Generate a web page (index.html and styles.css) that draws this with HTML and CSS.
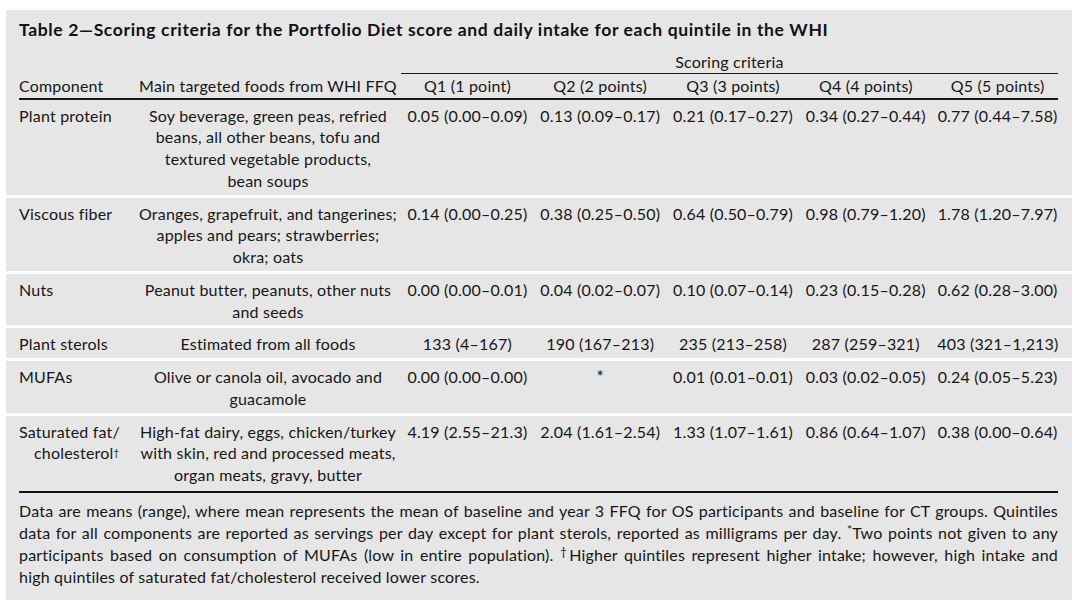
FILE: index.html
```html
<!DOCTYPE html>
<html lang="en">
<head>
<meta charset="utf-8">
<title>Table 2</title>
<link rel="stylesheet" href="styles.css">
</head>
<body>
<div class="panel">
  <div class="title">Table 2—Scoring criteria for the Portfolio Diet score and daily intake for each quintile in the WHI</div>
  <table class="tbl">
    <colgroup>
      <col class="c-g1"><col class="c-comp"><col class="c-food"><col class="c-q"><col class="c-q"><col class="c-q"><col class="c-q"><col class="c-q5"><col class="c-g2">
    </colgroup>
    <thead>
      <tr class="super">
        <th class="g"></th><th></th><th></th>
        <th class="span" colspan="5">Scoring criteria</th>
        <th class="g"></th>
      </tr>
      <tr class="head">
        <th class="g"></th>
        <th class="comp">Component</th>
        <th class="food">Main targeted foods from WHI FFQ</th>
        <th>Q1 (1 point)</th>
        <th>Q2 (2 points)</th>
        <th>Q3 (3 points)</th>
        <th>Q4 (4 points)</th>
        <th class="q5">Q5 (5 points)</th>
        <th class="g"></th>
      </tr>
    </thead>
    <tbody>
      <tr>
        <td class="g"></td>
        <td class="comp">Plant protein</td>
        <td class="food">Soy beverage, green peas, refried<br>beans, all other beans, tofu and<br>textured vegetable products,<br>bean soups</td>
        <td>0.05 (0.00–0.09)</td>
        <td>0.13 (0.09–0.17)</td>
        <td>0.21 (0.17–0.27)</td>
        <td>0.34 (0.27–0.44)</td>
        <td class="q5">0.77 (0.44–7.58)</td>
        <td class="g"></td>
      </tr>
      <tr>
        <td class="g"></td>
        <td class="comp">Viscous fiber</td>
        <td class="food">Oranges, grapefruit, and tangerines;<br>apples and pears; strawberries;<br>okra; oats</td>
        <td>0.14 (0.00–0.25)</td>
        <td>0.38 (0.25–0.50)</td>
        <td>0.64 (0.50–0.79)</td>
        <td>0.98 (0.79–1.20)</td>
        <td class="q5">1.78 (1.20–7.97)</td>
        <td class="g"></td>
      </tr>
      <tr>
        <td class="g"></td>
        <td class="comp">Nuts</td>
        <td class="food">Peanut butter, peanuts, other nuts<br>and seeds</td>
        <td>0.00 (0.00–0.01)</td>
        <td>0.04 (0.02–0.07)</td>
        <td>0.10 (0.07–0.14)</td>
        <td>0.23 (0.15–0.28)</td>
        <td class="q5">0.62 (0.28–3.00)</td>
        <td class="g"></td>
      </tr>
      <tr>
        <td class="g"></td>
        <td class="comp">Plant sterols</td>
        <td class="food">Estimated from all foods</td>
        <td>133 (4–167)</td>
        <td>190 (167–213)</td>
        <td>235 (213–258)</td>
        <td>287 (259–321)</td>
        <td class="q5">403 (321–1,213)</td>
        <td class="g"></td>
      </tr>
      <tr>
        <td class="g"></td>
        <td class="comp">MUFAs</td>
        <td class="food">Olive or canola oil, avocado and<br>guacamole</td>
        <td>0.00 (0.00–0.00)</td>
        <td class="star">*</td>
        <td>0.01 (0.01–0.01)</td>
        <td>0.03 (0.02–0.05)</td>
        <td class="q5">0.24 (0.05–5.23)</td>
        <td class="g"></td>
      </tr>
      <tr class="last">
        <td class="g"></td>
        <td class="comp hang">Saturated fat/ cholesterol<sup>†</sup></td>
        <td class="food">High-fat dairy, eggs, chicken/turkey<br>with skin, red and processed meats,<br>organ meats, gravy, butter</td>
        <td>4.19 (2.55–21.3)</td>
        <td>2.04 (1.61–2.54)</td>
        <td>1.33 (1.07–1.61)</td>
        <td>0.86 (0.64–1.07)</td>
        <td class="q5">0.38 (0.00–0.64)</td>
        <td class="g"></td>
      </tr>
    </tbody>
  </table>
  <div class="note">
    <span class="line">Data are means (range), where mean represents the mean of baseline and year 3 FFQ for OS participants and baseline for CT groups. Quintiles</span>
    <span class="line">data for all components are reported as servings per day except for plant sterols, reported as milligrams per day. <sup>*</sup>Two points not given to any</span>
    <span class="line">participants based on consumption of MUFAs (low in entire population). <sup>†</sup>Higher quintiles represent higher intake; however, high intake and</span>
    <span class="line end">high quintiles of saturated fat/cholesterol received lower scores.</span>
  </div>
</div>
</body>
</html>
```

FILE: styles.css
```css
html, body {
  margin: 0;
  padding: 0;
  background: #ffffff;
}

body {
  font-family: Lato, "Open Sans", "Liberation Sans", sans-serif;
  font-size: 16px;
  letter-spacing: 0.2px;
  color: #161616;
}

.panel {
  margin: 10px 8px 8px 6px;
  width: 1066px;
  background: #e6e6e6;
  padding: 9px 0 12px;
}

.title {
  padding: 0 13px;
  font-weight: 700;
  font-size: 17.5px;
  letter-spacing: 0.65px;
  line-height: 22px;
  color: #111111;
  margin-bottom: 10px;
  white-space: nowrap;
}

.tbl {
  width: 1066px;
  table-layout: fixed;
  border-collapse: separate;
  border-spacing: 0;
  line-height: 21.75px;
}

.c-g1 { width: 13px; }
.c-comp { width: 116px; }
.c-food { width: 266px; }
.c-q { width: 132.8px; }
.c-q5 { width: 125.8px; }
.c-g2 { width: 14px; }

.tbl th,
.tbl td {
  padding: 0;
  font-weight: 400;
  text-align: center;
  vertical-align: top;
  white-space: nowrap;
}

.tbl .comp {
  text-align: left;
  white-space: normal;
}

.tbl .hang {
  padding-left: 15px;
  text-indent: -15px;
}

.tbl .hang sup {
  font-size: 0.6em;
  vertical-align: 0.3em;
  letter-spacing: 0;
}

.tbl .star {
  font-size: 18px;
}

.super th.span {
  border-bottom: 1.5px solid #161616;
  padding-bottom: 0;
}

.head th {
  padding: 1px 0 1px;
}

.head th:not(.g) {
  border-bottom: 2px solid #161616;
}

.tbl tbody td {
  padding: 5px 0 3px;
}

.tbl th.q5,
.tbl td.q5 {
  padding-left: 5px;
}

.tbl tbody tr + tr td {
  border-top: 3px solid #ffffff;
}

.tbl tbody tr.last td {
  padding-bottom: 5px;
}

.tbl tbody tr.last td:not(.g) {
  border-bottom: 2.5px solid #111111;
}

sup {
  font-size: 0.75em;
  line-height: 0;
  vertical-align: 0.4em;
}

.note {
  padding: 7px 14px 0 13px;
  line-height: 22px;
}

.note .line {
  display: block;
  white-space: nowrap;
  text-align: justify;
  text-align-last: justify;
}

.note .line.end {
  text-align-last: left;
}
```
